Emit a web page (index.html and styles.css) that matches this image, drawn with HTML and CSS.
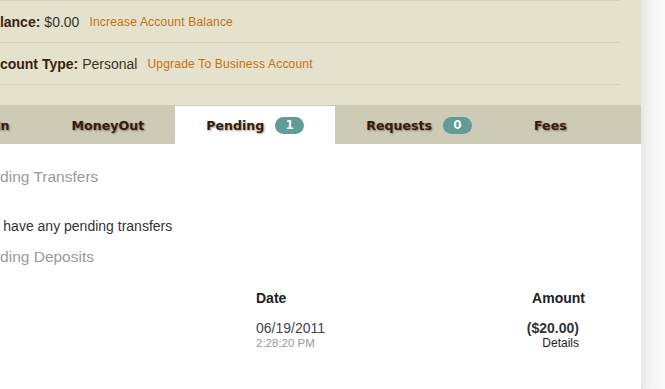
FILE: index.html
```html
<!DOCTYPE html>
<html lang="en">
<head>
    <meta charset="UTF-8">
    <meta name="viewport" content="width=device-width, initial-scale=1.0">
    <title>Pending</title>
    <link rel="stylesheet" href="styles.css">
</head>
<body>

<div class="page">
    <div class="account">
        <div class="accountRow">
            <span class="label">Balance:</span>
            <span class="value">$0.00</span>
            <a class="action" href="#">Increase Account Balance</a>
        </div>
        <div class="accountRow">
            <span class="label">Account Type:</span>
            <span class="value">Personal</span>
            <a class="action" href="#">Upgrade To Business Account</a>
        </div>
    </div>

    <ul class="tabs">
        <li>MoneyIn</li>
        <li>MoneyOut</li>
        <li class="active">Pending <span class="badge">1</span></li>
        <li>Requests <span class="badge">0</span></li>
        <li>Fees</li>
    </ul>

    <div class="content">
        <h3>Pending Transfers</h3>
        <p class="empty">You don't have any pending transfers</p>

        <h3 class="second">Pending Deposits</h3>
        <div class="deposits">
            <div class="colDate head">Date</div>
            <div class="colAmount head">Amount</div>

            <div class="colDate">
                <div class="day">06/19/2011</div>
                <div class="time">2:28:20 PM</div>
            </div>
            <div class="colAmount cell">
                <div class="sum">($20.00)</div>
                <a class="details" href="#">Details</a>
            </div>
        </div>
    </div>
</div>

</body>
</html>
```

FILE: styles.css
```css
html, body {
    margin: 0;
    height: 100%;
}
body {
    overflow: hidden;
    font-family: "Liberation Sans", Arial, sans-serif;
    background: linear-gradient(to right, #e7e7e7 641px, #f5f5f5 652px, #fbfbfb 665px);
}
.page {
    margin-left: -100px;
    width: 741px;
    min-height: 100%;
    background-color: #ffffff;
}

/* account block */
.account {
    background-color: #e4e1cc;
    padding: 0 21px 20px 82px;
}
.accountRow {
    height: 41px;
    display: flex;
    align-items: center;
    border-top: 1px solid #d3d0bb;
    font-size: 14px;
}
.accountRow:last-child {
    border-bottom: 1px solid #d3d0bb;
}
.label {
    font-weight: bold;
    color: #3b2211;
    margin-right: 4px;
}
.value {
    color: #38352a;
}
.action {
    margin-left: 10px;
    font-size: 12px;
    letter-spacing: 0.2px;
    color: #c6700f;
    text-decoration: none;
}

/* tabs */
.tabs {
    list-style: none;
    margin: 0;
    padding: 1px 0 0 18px;
    display: flex;
    background-color: #cdcab6;
}
.tabs li {
    height: 38px;
    padding: 0 31px;
    display: flex;
    align-items: center;
    font-family: "DejaVu Sans", Verdana, sans-serif;
    font-size: 12.6px;
    font-weight: bold;
    color: #381a0a;
    text-shadow: 1px 1px 2px rgba(0, 0, 0, 0.4);
}
.tabs li.active {
    background-color: #ffffff;
}
.badge {
    margin-left: 11px;
    width: 29px;
    height: 17px;
    border-radius: 9px;
    background-color: #5f9d96;
    color: #ffffff;
    font-size: 12px;
    display: flex;
    align-items: center;
    justify-content: center;
    text-shadow: 0 0 1px rgba(0, 0, 0, 0.3);
}

/* content */
.content {
    padding: 23px 56px 40px 42px;
}
h3 {
    margin: 0;
    padding-left: 30.5px;
    font-size: 15.5px;
    line-height: 20px;
    font-weight: normal;
    color: #9a9a9a;
}
h3.second {
    margin-top: 12px;
}
.empty {
    margin: 30px 0 0 0;
    font-size: 14px;
    line-height: 18px;
    color: #333;
}
.deposits {
    margin-top: 22px;
    display: grid;
    grid-template-columns: 1fr auto;
    row-gap: 13px;
}
.head {
    font-size: 14px;
    line-height: 18px;
    font-weight: bold;
    color: #222;
}
.colDate {
    padding-left: 314px;
}
.colAmount {
    text-align: right;
}
.cell {
    padding-right: 6px;
}
.day {
    font-size: 14px;
    line-height: 16px;
    color: #444;
}
.time {
    font-size: 11.5px;
    line-height: 14px;
    color: #999;
}
.sum {
    font-size: 14px;
    line-height: 16px;
    font-weight: bold;
    color: #333;
}
.details {
    display: block;
    font-size: 12px;
    line-height: 14px;
    color: #222;
    text-decoration: none;
}
```
